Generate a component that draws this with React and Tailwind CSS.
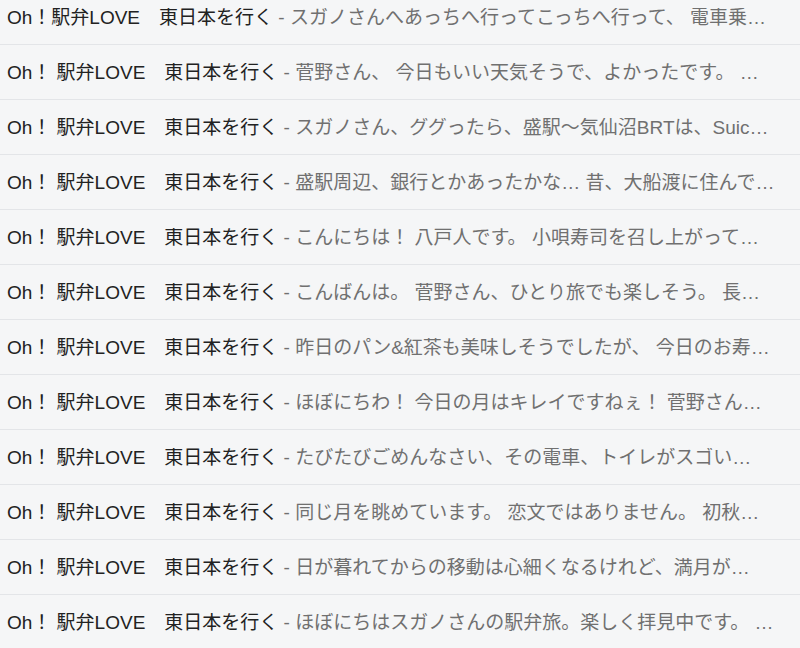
import React from "react";

const rows = [
  { name: "Oh！駅弁LOVE　東日本を行く", snip: "スガノさんへあっちへ行ってこっちへ行って、 電車乗…" },
  { name: "Oh！ 駅弁LOVE　東日本を行く", snip: "菅野さん、 今日もいい天気そうで、よかったです。 …" },
  { name: "Oh！ 駅弁LOVE　東日本を行く", snip: "スガノさん、ググったら、盛駅〜気仙沼BRTは、Suic…" },
  { name: "Oh！ 駅弁LOVE　東日本を行く", snip: "盛駅周辺、銀行とかあったかな… 昔、大船渡に住んで…" },
  { name: "Oh！ 駅弁LOVE　東日本を行く", snip: "こんにちは！ 八戸人です。 小唄寿司を召し上がって…" },
  { name: "Oh！ 駅弁LOVE　東日本を行く", snip: "こんばんは。 菅野さん、ひとり旅でも楽しそう。 長…" },
  { name: "Oh！ 駅弁LOVE　東日本を行く", snip: "昨日のパン&紅茶も美味しそうでしたが、 今日のお寿…" },
  { name: "Oh！ 駅弁LOVE　東日本を行く", snip: "ほぼにちわ！ 今日の月はキレイですねぇ！ 菅野さん…" },
  { name: "Oh！ 駅弁LOVE　東日本を行く", snip: "たびたびごめんなさい、その電車、トイレがスゴい…" },
  { name: "Oh！ 駅弁LOVE　東日本を行く", snip: "同じ月を眺めています。 恋文ではありません。 初秋…" },
  { name: "Oh！ 駅弁LOVE　東日本を行く", snip: "日が暮れてからの移動は心細くなるけれど、満月が…" },
  { name: "Oh！ 駅弁LOVE　東日本を行く", snip: "ほぼにちはスガノさんの駅弁旅。楽しく拝見中です。 …" },
];

export default function App() {
  return (
    <div className="w-[800px] h-[648px] overflow-hidden bg-[#f5f6f7] font-['Liberation_Sans','Noto_Sans_CJK_JP',sans-serif]">
      <div className="flex flex-col -mt-[10px]">
        {rows.map((r, i) => (
          <div
            key={i}
            className="h-[55px] shrink-0 flex items-center border-b border-[#e3e5e8] pl-[7px] pr-[20px]"
          >
            <div className="whitespace-nowrap overflow-hidden text-[19px] leading-none">
              <span className="text-[#222222]">{r.name}</span>
              <span className="text-[#707070]"> - {r.snip}</span>
            </div>
          </div>
        ))}
      </div>
    </div>
  );
}
